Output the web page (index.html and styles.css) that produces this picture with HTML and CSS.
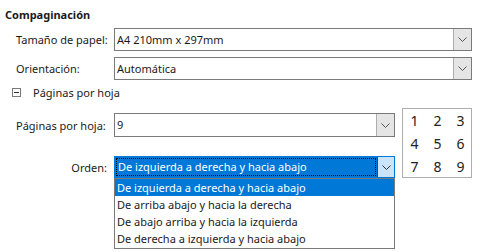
FILE: index.html
```html
<!DOCTYPE html>
<html lang="es">
<head>
    <meta charset="UTF-8">
    <title>Compaginación</title>
    <link rel="stylesheet" href="styles.css">
</head>
<body>
    <div class="panel">
        <h1 class="title">Compaginación</h1>

        <div class="row">
            <label class="label">Tamaño de papel:</label>
            <div class="combo wide">
                <span class="value">A4 210mm x 297mm</span>
                <span class="arrow"><svg width="9" height="5" viewBox="0 0 9 5"><path d="M0.5 0.5 L4.5 4.5 L8.5 0.5" fill="none" stroke="#555" stroke-width="1"/></svg></span>
            </div>
        </div>

        <div class="row">
            <label class="label">Orientación:</label>
            <div class="combo wide">
                <span class="value">Automática</span>
                <span class="arrow"><svg width="9" height="5" viewBox="0 0 9 5"><path d="M0.5 0.5 L4.5 4.5 L8.5 0.5" fill="none" stroke="#555" stroke-width="1"/></svg></span>
            </div>
        </div>

        <div class="expander">
            <span class="toggle"></span>
            <span>Páginas por hoja</span>
        </div>

        <div class="sheet">
            <div class="sheet-fields">
                <div class="row">
                    <label class="label">Páginas por hoja:</label>
                    <div class="combo narrow">
                        <span class="value">9</span>
                        <span class="arrow"><svg width="9" height="5" viewBox="0 0 9 5"><path d="M0.5 0.5 L4.5 4.5 L8.5 0.5" fill="none" stroke="#555" stroke-width="1"/></svg></span>
                    </div>
                </div>

                <div class="row order-row">
                    <label class="label right">Orden:</label>
                    <div class="combo narrow focused">
                        <span class="value"><span class="focus-rect">De izquierda a derecha y hacia abajo</span></span>
                        <span class="arrow"><svg width="9" height="5" viewBox="0 0 9 5"><path d="M0.5 0.5 L4.5 4.5 L8.5 0.5" fill="none" stroke="#333" stroke-width="1"/></svg></span>

                        <ul class="dropdown">
                            <li class="selected">De izquierda a derecha y hacia abajo</li>
                            <li>De arriba abajo y hacia la derecha</li>
                            <li>De abajo arriba y hacia la izquierda</li>
                            <li>De derecha a izquierda y hacia abajo</li>
                        </ul>
                    </div>
                </div>
            </div>

            <div class="preview">
                <span>1</span><span>2</span><span>3</span>
                <span>4</span><span>5</span><span>6</span>
                <span>7</span><span>8</span><span>9</span>
            </div>
        </div>
    </div>
</body>
</html>
```

FILE: styles.css
```css
* {
    margin: 0;
    padding: 0;
    box-sizing: border-box;
}
body {
    font-family: 'Noto Sans', 'Liberation Sans', sans-serif;
    font-size: 11px;
    color: #1a1a1a;
    background: #fff;
    width: 483px;
    height: 252px;
    overflow: hidden;
}
.panel {
    padding: 7px 0 0 5px;
}
.title {
    font-size: 11px;
    font-weight: bold;
    line-height: 15px;
    margin-bottom: 6px;
}
.row {
    display: flex;
    align-items: center;
    padding-left: 11px;
    margin-bottom: 6px;
}
.label {
    width: 98px;
    flex: none;
    white-space: nowrap;
}
.label.right {
    text-align: right;
    padding-right: 7px;
}
.combo {
    position: relative;
    display: flex;
    height: 23px;
    border: 1px solid #7a7a7a;
    background: #fff;
}
.combo.wide {
    width: 358px;
}
.combo.narrow {
    width: 281px;
    height: 24px;
}
.combo .value {
    flex: 1;
    padding-left: 2px;
    line-height: 21px;
    white-space: nowrap;
    overflow: hidden;
}
.combo.narrow .value {
    line-height: 22px;
}
.combo .arrow {
    width: 18px;
    flex: none;
    display: flex;
    align-items: center;
    justify-content: center;
    background: #e5e5e5;
    border-left: 1px solid #adadad;
}
.combo.focused {
    height: 22px;
    border-color: #0078d7;
}
.combo.focused .value {
    background: #0078d7;
    color: #fff;
    padding: 1px;
    line-height: 18px;
}
.focus-rect {
    display: block;
    height: 18px;
    padding-left: 1px;
    border: 1px dotted #fff;
    outline: 1px dotted #000;
    outline-offset: -1px;
    line-height: 16px;
}
.combo.focused .arrow {
    background: #cce4f7;
    border-left: 1px solid #005499;
    width: 17px;
}
.expander {
    display: flex;
    align-items: center;
    gap: 12px;
    padding-left: 7px;
    height: 16px;
    margin-top: -2px;
}
.toggle {
    position: relative;
    width: 9px;
    height: 9px;
    border: 1px solid #7a7a7a;
}
.toggle::after {
    content: '';
    position: absolute;
    left: 1px;
    top: 3px;
    width: 5px;
    height: 1px;
    background: #333;
}
.sheet {
    display: flex;
    margin-top: 8px;
}
.sheet-fields {
    padding-top: 5px;
}
.order-row {
    margin-top: 19px;
}
.dropdown {
    position: absolute;
    left: -1px;
    top: 21px;
    width: 281px;
    list-style: none;
    border: 1px solid #7a7a7a;
    background: #fff;
    padding-bottom: 1px;
}
.dropdown li {
    height: 17px;
    line-height: 17px;
    padding-left: 2px;
    white-space: nowrap;
}
.dropdown li.selected {
    background: #0078d7;
    color: #fff;
}
.preview {
    display: grid;
    grid-template-columns: repeat(3, 23px);
    grid-template-rows: repeat(3, 23px);
    width: 70px;
    height: 70px;
    margin-left: 7px;
    border: 1px solid #adadad;
    font-size: 14px;
    color: #222;
    align-items: center;
    justify-items: center;
}
```
